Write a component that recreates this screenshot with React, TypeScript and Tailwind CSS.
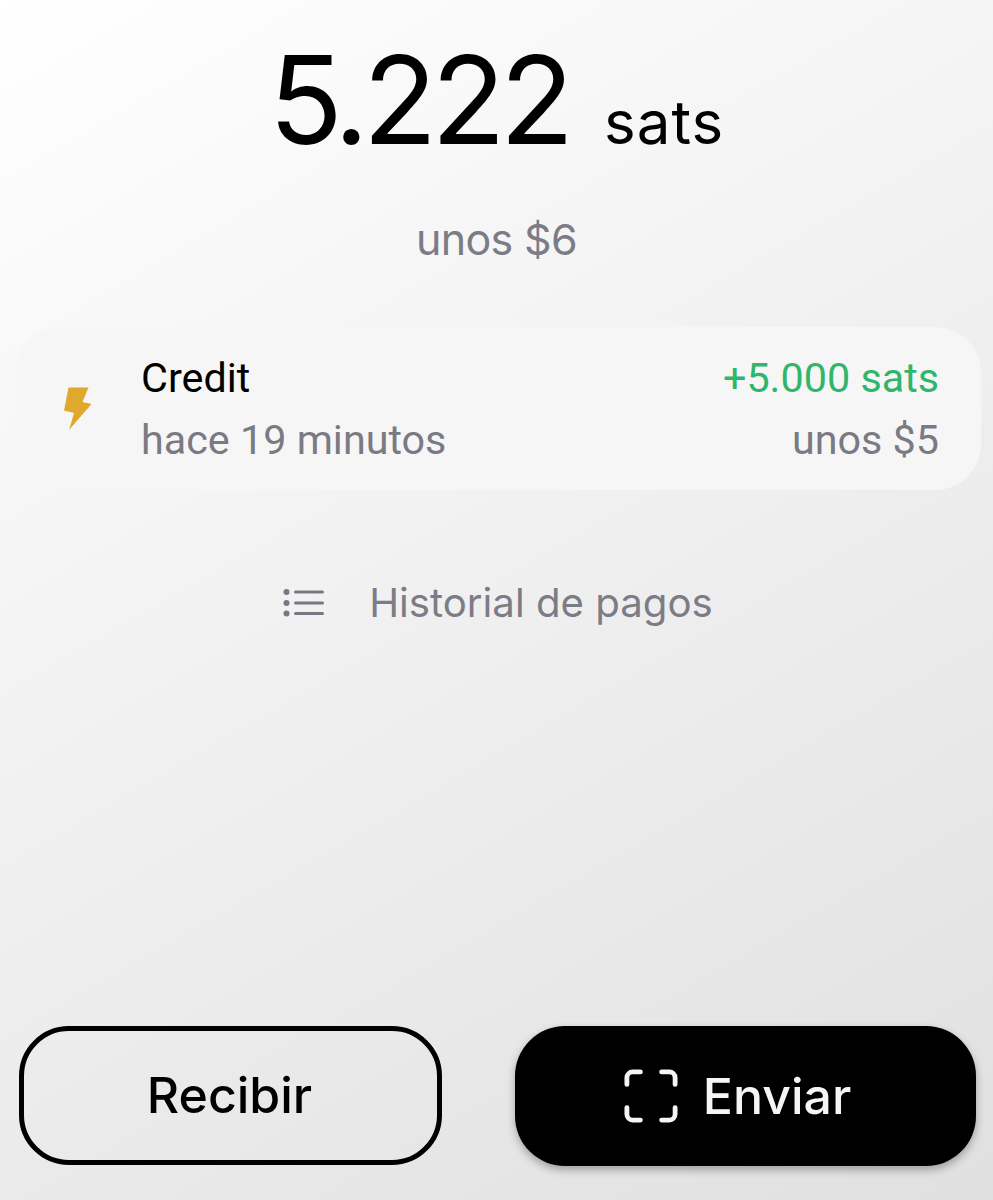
import React from 'react';

const inter = "font-['Inter',sans-serif]";
const roboto = "font-['Roboto',sans-serif]";

const Bolt = () => (
    <svg width="28" height="44" viewBox="0 0 28 44" className="shrink-0">
        <path d="M4.5 0.5 L24.5 0.5 L18.5 15 L27.5 17 L5 43 L10 26 L0 23.5 Z" fill="#e0a82e" />
    </svg>
);

const ListIcon = () => (
    <svg width="42" height="30" viewBox="0 0 42 30" className="shrink-0" fill="#787882">
        <circle cx="3.5" cy="4" r="3" />
        <circle cx="3.5" cy="15" r="3" />
        <circle cx="3.5" cy="25.5" r="3" />
        <rect x="11" y="2.5" width="30" height="3" rx="1.5" />
        <rect x="11" y="13.5" width="30" height="3" rx="1.5" />
        <rect x="11" y="24" width="30" height="3" rx="1.5" />
    </svg>
);

const ScanIcon = () => (
    <svg width="54" height="54" viewBox="0 0 56 56" fill="none" stroke="#f5f5f5" strokeWidth="5" strokeLinecap="round" strokeLinejoin="round">
        <path d="M3 16 V9 a6 6 0 0 1 6 -6 H17" />
        <path d="M39 3 H47 a6 6 0 0 1 6 6 V16" />
        <path d="M53 40 V47 a6 6 0 0 1 -6 6 H39" />
        <path d="M17 53 H9 a6 6 0 0 1 -6 -6 V40" />
    </svg>
);

export default function App() {
    return (
        <div className={`w-[993px] h-[1200px] overflow-hidden flex flex-col bg-[linear-gradient(150deg,#ffffff_0%,#e0e0e0_100%)] ${inter}`}>
            <div className="h-[172px] pt-[20px] flex items-baseline justify-center gap-[36px] text-black">
                <span className="text-[122px] leading-[160px] tracking-[-6px] font-[380] [font-variation-settings:'opsz'_32]">5.222</span>
                <span className="text-[60px] leading-[64px] tracking-[1px]">sats</span>
            </div>

            <div className="mt-[38px] h-[58px] leading-[58px] text-center text-[43px] text-[#7c7c86] tracking-[-0.7px]">unos $6</div>

            <div className={`mt-[59px] ml-[15px] mr-[12px] h-[163px] rounded-[46px] bg-[#f6f6f6] flex items-center pl-[49px] pr-[42px] ${roboto}`}>
                <Bolt />
                <div className="ml-[49px] flex-1 flex flex-col gap-[14px]">
                    <div className="flex justify-between text-[41.3px] leading-[48px]">
                        <span className="text-black">Credit</span>
                        <span className="text-[#30b56c]">+5.000 sats</span>
                    </div>
                    <div className="flex justify-between text-[41.3px] leading-[48px] text-[#7a7a84]">
                        <span>hace 19 minutos</span>
                        <span>unos $5</span>
                    </div>
                </div>
            </div>

            <div className="mt-[88px] pl-[3px] flex items-center justify-center gap-[44px]">
                <ListIcon />
                <span className="text-[40.2px] leading-[50px] text-[#7c7c86]">Historial de pagos</span>
            </div>

            <div className="mt-auto mb-[34px] flex items-stretch pl-[19px] pr-[17px] justify-between">
                <button className="w-[423px] h-[139px] pr-[2px] rounded-[50px] border-[5px] border-black bg-transparent text-[50px] font-[550] text-black">Recibir</button>
                <button className="w-[461px] h-[140px] pr-[16px] rounded-[50px] bg-black text-[#f5f5f5] text-[50px] font-[550] flex items-center justify-center gap-[25px] shadow-[0_4px_8px_rgba(0,0,0,0.3)]">
                    <ScanIcon />
                    <span>Enviar</span>
                </button>
            </div>
        </div>
    );
}
